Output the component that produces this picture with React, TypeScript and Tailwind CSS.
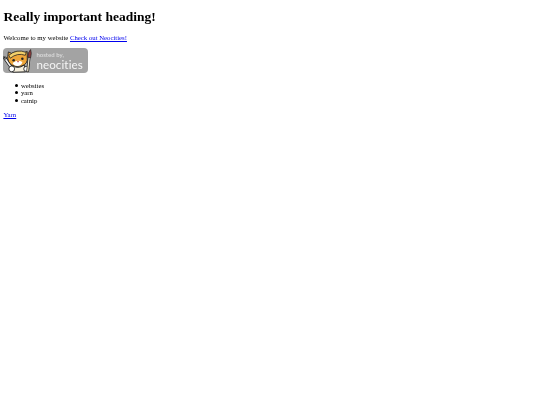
const items = ['websites', 'yarn', 'catnip'];

export default function App() {
  return (
    <div className="min-h-[405px] bg-white text-black p-[3.4px] font-['Liberation_Serif',serif] text-[6.75px] leading-[7.6px] blur-[0.2px]">
      <h1 className="mt-[5.7px] mb-[9px] text-[13.5px] leading-[15.5px] font-bold">Really important heading!</h1>
      <p className="mb-[6.7px]">
        Welcome to my website <a href="#" className="text-[#0000ee] underline">Check out Neocities!</a>
      </p>
      <a href="#" className="flex items-center w-[84.4px] h-[25.3px] rounded-[4px] bg-[#a3a3a3]">
        <svg viewBox="0 0 32 25" className="w-[31px] h-[25.3px] shrink-0">
          {/* wrench */}
          <path d="M2 10 L9 20" stroke="#222" strokeWidth="3.4" strokeLinecap="round" />
          <path d="M2 10 L9 20" stroke="#eee" strokeWidth="1.8" strokeLinecap="round" />
          <path d="M0.8 8 L2.4 11 L4.6 9" fill="none" stroke="#222" strokeWidth="1" />
          {/* body */}
          <path d="M9 17 Q15 22 22 17 L23 24 L10 24.5 Z" fill="#f6efdc" stroke="#222" strokeWidth="0.9" />
          <circle cx="9" cy="21" r="3" fill="#fff" stroke="#222" strokeWidth="0.9" />
          <circle cx="24" cy="21" r="2.6" fill="#fff" stroke="#222" strokeWidth="0.9" />
          {/* head */}
          <path d="M5 8 L5.5 3.5 L9 5 Q15 1.5 21 4.5 L25 3 L25 9 Q26 16 19 18 Q13 19.5 9 17 Q4.5 14 5 8 Z" fill="#eea63a" stroke="#222" strokeWidth="0.9" />
          {/* bandana */}
          <path d="M6 7 Q14 0 24 4 L23 7 Q15 4 7.5 10 Z" fill="#f2cf6a" stroke="#222" strokeWidth="0.8" />
          <path d="M10 15 Q15 11 20 14 Q19 18 15 18 Q11 18 10 15 Z" fill="#fff" />
          <circle cx="11" cy="12" r="1.3" fill="#222" />
          <circle cx="20" cy="10.5" r="1.3" fill="#222" />
          <circle cx="15.5" cy="13.5" r="0.8" fill="#b33" />
          {/* brush */}
          <path d="M27 9 L25.5 23" stroke="#222" strokeWidth="2.8" strokeLinecap="round" />
          <path d="M27 9 L25.5 23" stroke="#f4e7c8" strokeWidth="1.3" strokeLinecap="round" />
          <path d="M28.5 1 Q30 5 28.5 9.5 L25.5 9 Q25.5 4 28.5 1 Z" fill="#8c3b3b" stroke="#222" strokeWidth="0.7" />
        </svg>
        <div className="flex flex-col pl-[2px] font-['Lato',sans-serif] text-white">
          <span className="text-[6px] leading-[6.5px] pt-[1px] font-bold text-[#d9d9d9]">hosted by,</span>
          <span className="text-[11.6px] leading-[11px] text-[#f5f5f5] tracking-[0.1px]">neocities</span>
        </div>
      </a>
      <ul className="mt-[8.4px] mb-[6.7px] flex flex-col gap-[0.1px]">
        {items.map((item) => (
          <li key={item} className="flex items-center h-[7.5px] pl-[11.4px] gap-[3.1px]">
            <span className="w-[3px] h-[3px] rounded-full bg-black shrink-0" />
            <span>{item}</span>
          </li>
        ))}
      </ul>
      <p className="mt-[7px]">
        <a href="#" className="text-[#0000ee] underline">Yarn</a>
      </p>
    </div>
  );
}
